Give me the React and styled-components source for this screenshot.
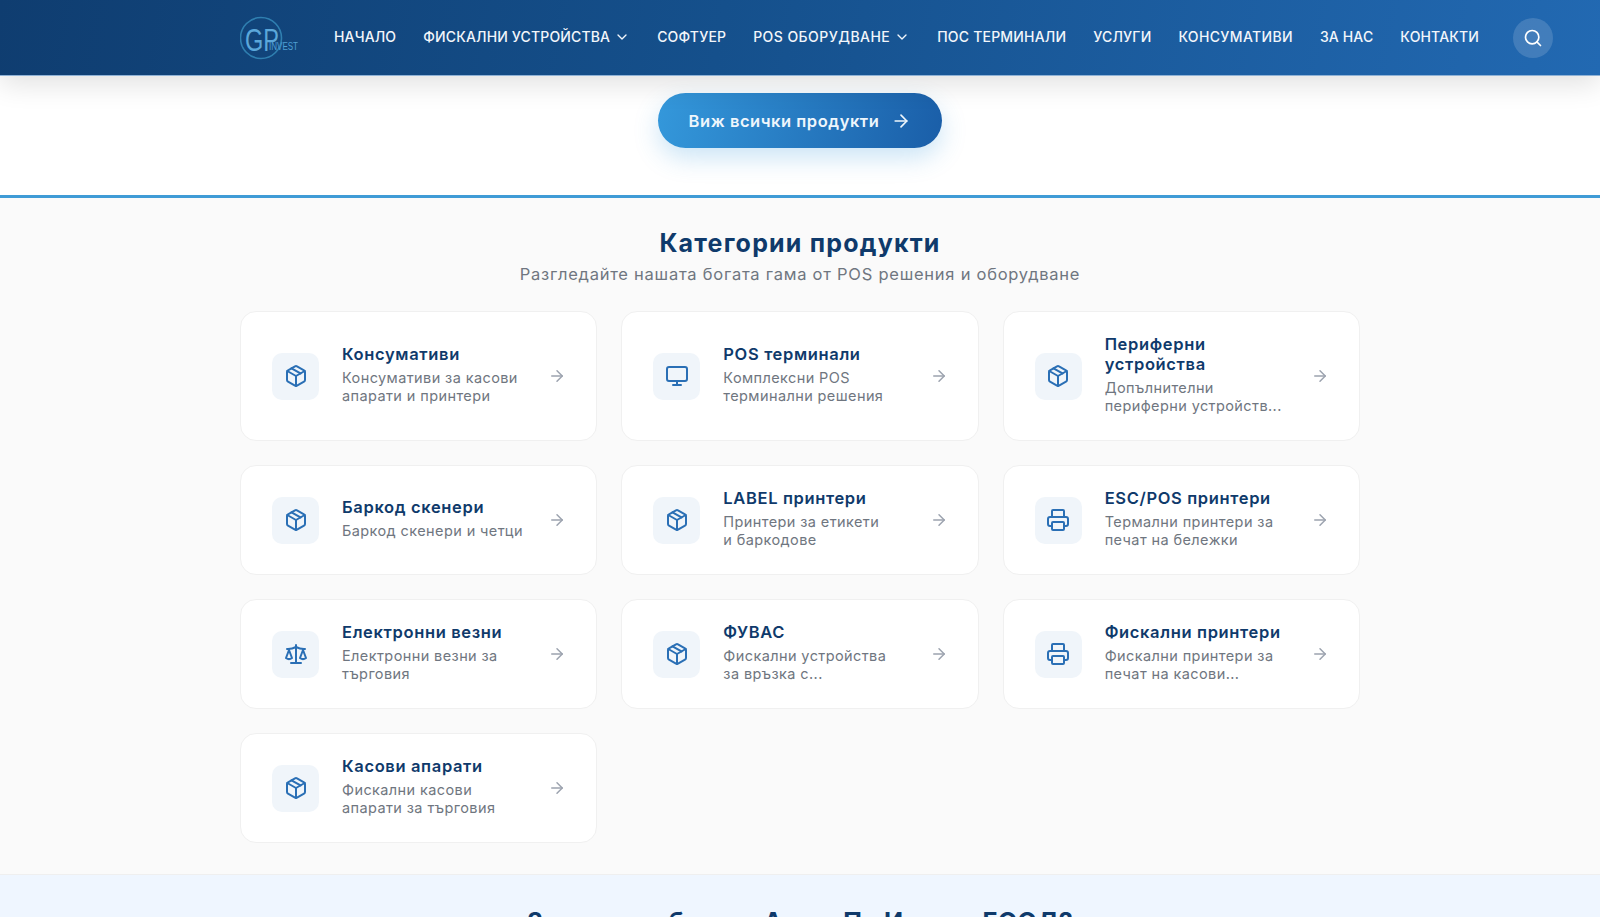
import React from "react";
import styled, { createGlobalStyle } from "styled-components";
import {
  ArrowRight,
  ChevronDown,
  Monitor,
  Package,
  Printer,
  Scale,
  Search,
} from "lucide-react";

const GlobalStyle = createGlobalStyle`
  html, body {
    margin: 0;
    height: 917px;
    overflow: hidden;
    background: #fff;
    font-family: "Inter", "Open Sans", sans-serif;
  }
  * { box-sizing: border-box; }
`;

const navItems = [
  { label: "Начало" },
  { label: "Фискални устройства", caret: true },
  { label: "Софтуер" },
  { label: "POS оборудване", caret: true, spacing: 0.45 },
  { label: "ПОС терминали", spacing: 0.2 },
  { label: "Услуги" },
  { label: "Консумативи", spacing: 0.35 },
  { label: "За нас" },
  { label: "Контакти" },
];

const categories = [
  { title: "Консумативи", text: "Консумативи за касови апарати и принтери", icon: Package },
  { title: "POS терминали", text: "Комплексни POS терминални решения", icon: Monitor },
  { title: "Периферни устройства", text: "Допълнителни периферни устройств...", icon: Package },
  { title: "Баркод скенери", text: "Баркод скенери и четци", icon: Package },
  { title: "LABEL принтери", text: "Принтери за етикети и\u00a0баркодове", icon: Package },
  { title: "ESC/POS принтери", text: "Термални принтери за печат на бележки", icon: Printer },
  { title: "Електронни везни", text: "Електронни везни за търговия", icon: Scale },
  { title: "ФУВАС", text: "Фискални устройства за\u00a0връзка с...", icon: Package },
  { title: "Фискални принтери", text: "Фискални принтери за печат на касови...", icon: Printer },
  { title: "Касови апарати", text: "Фискални касови апарати за търговия", icon: Package },
];

const Header = styled.header`
  position: relative;
  z-index: 2;
  height: 76px;
  padding-left: 240px;
  display: flex;
  align-items: center;
  background: linear-gradient(100deg, #0f3d70 0%, #15508c 45%, #2269b2 100%);
  box-shadow: 0 8px 28px rgba(0, 0, 0, 0.12);
  border-bottom: 1px solid #8fb2d6;
`;

const Logo = styled.svg`
  width: 64px;
  height: 46px;
  margin-right: 30px;
  flex: none;
`;

const Nav = styled.nav`
  display: flex;
  align-items: center;
  gap: 27px;
`;

const NavLink = styled.a`
  display: flex;
  align-items: center;
  gap: 4px;
  padding-bottom: 2px;
  color: #f2f6fb;
  font-size: 14px;
  font-weight: 500;
  letter-spacing: ${(p) => p.$spacing ?? 0.15}px;
  text-transform: uppercase;
  white-space: nowrap;
`;

const SearchButton = styled.button`
  width: 40px;
  height: 40px;
  margin-left: 34px;
  padding: 0;
  flex: none;
  display: flex;
  align-items: center;
  justify-content: center;
  border: 0;
  border-radius: 50%;
  color: #fff;
  background: rgba(255, 255, 255, 0.15);
`;

const Hero = styled.section`
  height: 119px;
  padding-top: 17px;
  display: flex;
  justify-content: center;
  background: #fff;
`;

const AllButton = styled.a`
  width: 284px;
  height: 55px;
  display: flex;
  align-items: center;
  justify-content: center;
  gap: 12px;
  border-radius: 28px;
  color: #eef6fc;
  font-size: 16.5px;
  font-weight: 600;
  letter-spacing: 0.55px;
  background: linear-gradient(100deg, #3498db 0%, #1a5ea8 100%);
  box-shadow: 0 10px 24px rgba(52, 152, 219, 0.25);
`;

const Categories = styled.section`
  padding: 29px 0 31px;
  background: #fafafa;
  border-top: 3px solid #3f9bd6;
  border-bottom: 1px solid #efefef;
`;

const Heading = styled.h2`
  margin: 0 0 1px;
  text-align: center;
  color: #0f3a6b;
  font-size: 25px;
  line-height: 32px;
  font-weight: 700;
  letter-spacing: 1.2px;
`;

const WhyHeading = styled(Heading)`
  letter-spacing: 0.2px;
`;

const Subheading = styled.p`
  margin: 0 0 23px;
  text-align: center;
  color: #6f7680;
  font-size: 16.5px;
  line-height: 28px;
  letter-spacing: 0.75px;
`;

const Grid = styled.div`
  width: 1120px;
  margin: 0 auto;
  display: grid;
  grid-template-columns: repeat(3, 1fr);
  gap: 24px;
`;

const Card = styled.a`
  min-height: 110px;
  padding: 22px 30px 22px 31px;
  display: flex;
  align-items: center;
  background: #fff;
  border: 1px solid #f0f0f0;
  border-radius: 16px;
`;

const IconBox = styled.div`
  width: 47px;
  height: 47px;
  margin-right: 23px;
  flex: none;
  display: flex;
  align-items: center;
  justify-content: center;
  border-radius: 10px;
  color: #2a6fb5;
  background: #f0f5fa;
`;

const CardBody = styled.div`
  flex: 1;
  min-width: 0;
  padding-bottom: 3px;
`;

const CardTitle = styled.h3`
  margin: 0 0 5px;
  color: #0f3a6b;
  font-size: 16.5px;
  line-height: 20px;
  font-weight: 600;
  letter-spacing: 0.65px;
`;

const CardText = styled.p`
  margin: 0;
  color: #6f7680;
  font-size: 14.5px;
  line-height: 18px;
  letter-spacing: 0.4px;
`;

const CardArrow = styled(ArrowRight)`
  margin-left: 18px;
  flex: none;
  color: #9ca3af;
`;

const Why = styled.section`
  height: 120px;
  padding-top: 31px;
  background: #eff6ff;
`;

export default function App() {
  return (
    <>
      <GlobalStyle />
      <Header>
        <Logo viewBox="0 0 64 46">
          <circle cx="21" cy="23" r="20.5" fill="none" stroke="#2f7fb0" strokeWidth="1.6" />
          <text x="5" y="36" fill="#5ba7da" fontFamily="Liberation Sans" fontSize="32" textLength="34" lengthAdjust="spacingAndGlyphs">GP</text>
          <text x="29" y="34.5" fill="#4f9fd4" fontFamily="Liberation Sans" fontSize="10" textLength="29" lengthAdjust="spacingAndGlyphs">INVEST</text>
        </Logo>
        <Nav>
          {navItems.map((item) => (
            <NavLink key={item.label} $spacing={item.spacing}>
              {item.label}
              {item.caret && <ChevronDown size={16} strokeWidth={2} />}
            </NavLink>
          ))}
        </Nav>
        <SearchButton>
          <Search size={20} strokeWidth={2} />
        </SearchButton>
      </Header>
      <Hero>
        <AllButton>
          Виж всички продукти
          <ArrowRight size={20} strokeWidth={2} />
        </AllButton>
      </Hero>
      <Categories>
        <Heading>Категории продукти</Heading>
        <Subheading>Разгледайте нашата богата гама от POS решения и оборудване</Subheading>
        <Grid>
          {categories.map(({ title, text, icon: Icon }) => (
            <Card key={title}>
              <IconBox>
                <Icon size={24} strokeWidth={2} />
              </IconBox>
              <CardBody>
                <CardTitle>{title}</CardTitle>
                <CardText>{text}</CardText>
              </CardBody>
              <CardArrow size={18} strokeWidth={2} />
            </Card>
          ))}
        </Grid>
      </Categories>
      <Why>
        <WhyHeading>Защо да изберете Аджи Пи Инвест ЕООД?</WhyHeading>
      </Why>
    </>
  );
}
